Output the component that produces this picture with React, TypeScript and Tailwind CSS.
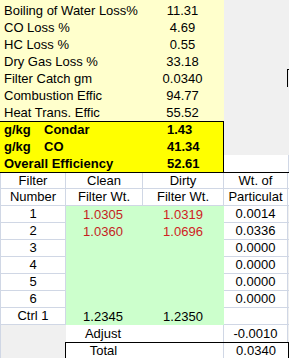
const losses = [
  { label: '', value: '' },
  { label: 'Boiling of Water Loss%', value: '11.31' },
  { label: 'CO Loss %', value: '4.69' },
  { label: 'HC Loss %', value: '0.55' },
  { label: 'Dry Gas Loss %', value: '33.18' },
  { label: 'Filter Catch gm', value: '0.0340', mark: true },
  { label: 'Combustion Effic', value: '94.77' },
  { label: 'Heat Trans. Effic', value: '55.52' },
]

const filters = [
  { n: '1', clean: '1.0305', dirty: '1.0319', wt: '0.0014', red: true },
  { n: '2', clean: '1.0360', dirty: '1.0696', wt: '0.0336', red: true },
  { n: '3', clean: '', dirty: '', wt: '0.0000' },
  { n: '4', clean: '', dirty: '', wt: '0.0000' },
  { n: '5', clean: '', dirty: '', wt: '0.0000' },
  { n: '6', clean: '', dirty: '', wt: '0.0000' },
  { n: 'Ctrl 1', clean: '1.2345', dirty: '1.2350', wt: '' },
]

export default function App() {
  return (
    <div
      className="w-[289px] h-[358px] overflow-hidden bg-[#F0F0F0] text-[13px] text-black"
      style={{ fontFamily: '"Liberation Sans", Arial, sans-serif' }}
    >
      <div className="-mt-[15px]">
        {/* loss rows */}
        {losses.map((r, i) => (
          <div key={i} className="flex h-[17px]">
            <div className="w-[143px] bg-[#FFFFCC] pl-[4px] flex items-center whitespace-nowrap overflow-hidden">{r.label}</div>
            <div className="w-[81px] bg-[#FFFFCC] flex items-center justify-center pr-[2px]">{r.value}</div>
            <div className="flex-1 flex justify-end">
              {r.mark && <div className="w-[2px] h-[18px] -mt-px border-l border-t border-black" />}
            </div>
          </div>
        ))}

        {/* yellow summary box */}
        <div className="flex h-[17px] font-bold">
          <div className="w-[224px] bg-[#FFFF00] border-t border-r border-black flex items-center">
            <span className="w-[44px] pl-[4px]">g/kg</span>
            <span className="w-[119px]">Condar</span>
            <span className="pl-[4px]">1.43</span>
          </div>
          <div className="flex-1" />
        </div>
        <div className="flex h-[17px] font-bold">
          <div className="w-[224px] bg-[#FFFF00] border-r border-black flex items-center">
            <span className="w-[44px] pl-[4px]">g/kg</span>
            <span className="w-[119px]">CO</span>
            <span className="pl-[4px]">41.34</span>
          </div>
          <div className="flex-1" />
        </div>
        <div className="flex h-[17px] font-bold">
          <div className="w-[224px] bg-[#FFFF00] border-r border-black flex items-center">
            <span className="w-[163px] pl-[4px] whitespace-nowrap">Overall Efficiency</span>
            <span className="pl-[4px]">52.61</span>
          </div>
          <div className="flex-1 bg-white border-r border-[#D0D7E5]" />
        </div>

        {/* filter table header */}
        <div className="flex h-[17px] border-t border-black bg-white">
          <div className="w-[66px] border-l border-r border-b border-[#D0D7E5] flex items-center justify-center">Filter</div>
          <div className="w-[77px] border-r border-b border-[#D0D7E5] flex items-center justify-center">Clean</div>
          <div className="w-[81px] border-r border-b border-[#D0D7E5] flex items-center justify-center">Dirty</div>
          <div className="w-[64px] border-r border-b border-[#D0D7E5] flex items-center justify-center">Wt. of</div>
          <div className="flex-1 border-b border-[#D0D7E5]" />
        </div>
        <div className="flex h-[17px] bg-white">
          <div className="w-[66px] border-l border-r border-b border-[#D0D7E5] flex items-center justify-center">Number</div>
          <div className="w-[77px] border-r border-b border-[#D0D7E5] flex items-center justify-center">Filter Wt.</div>
          <div className="w-[81px] border-r border-b border-[#D0D7E5] flex items-center justify-center">Filter Wt.</div>
          <div className="w-[64px] border-r border-b border-[#D0D7E5] flex items-center justify-center">Particulat</div>
          <div className="flex-1 border-b border-[#D0D7E5]" />
        </div>

        {/* filter rows */}
        {filters.map(f => (
          <div key={f.n} className="flex h-[17px]">
            <div className="w-[66px] bg-white border-l border-r border-b border-[#D0D7E5] flex items-center justify-center">{f.n}</div>
            <div className={`w-[77px] bg-[#CCFFCC] flex items-center justify-center pr-[3px] ${f.red ? 'text-[#C41E1E]' : ''}`}>{f.clean}</div>
            <div className={`w-[81px] bg-[#CCFFCC] flex items-center justify-center pr-[1px] ${f.red ? 'text-[#D02222]' : ''}`}>{f.dirty}</div>
            <div className="w-[64px] bg-white border-r border-b border-[#D0D7E5] flex items-center justify-center">{f.wt}</div>
            <div className="flex-1 border-b border-[#D0D7E5]" />
          </div>
        ))}

        {/* adjust */}
        <div className="flex h-[17px]">
          <div className="w-[66px] border-l border-[#D0D7E5]" />
          <div className="w-[77px] bg-white flex items-center justify-center pr-[3px]">Adjust</div>
          <div className="w-[81px] bg-white border-r border-[#D0D7E5]" />
          <div className="w-[64px] bg-white border-r border-[#D0D7E5] flex items-center justify-center">-0.0010</div>
          <div className="flex-1" />
        </div>

        {/* total */}
        <div className="flex h-[17px]">
          <div className="w-[65px] border-l border-[#D0D7E5]" />
          <div className="w-[224px] bg-white border-l border-t border-r border-black flex">
            <div className="w-[77px] flex items-center justify-center pr-[2px]">Total</div>
            <div className="w-[81px] border-r border-[#D0D7E5]" />
            <div className="flex-1 flex items-center justify-center">0.0340</div>
          </div>
        </div>
      </div>
    </div>
  )
}
